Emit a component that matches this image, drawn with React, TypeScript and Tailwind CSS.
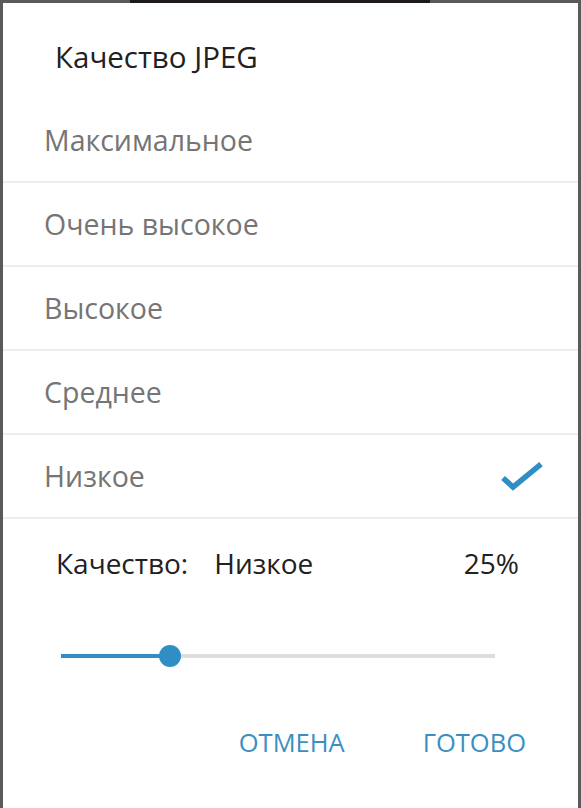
import React from "react";

const items = ["Максимальное", "Очень высокое", "Высокое", "Среднее", "Низкое"];

export default function App() {
  return (
    <div className="w-[581px] h-[808px] bg-[#5a5a5a] flex flex-col overflow-hidden" style={{ fontFamily: '"Open Sans", "Noto Sans", sans-serif' }}>
      <div className="h-[3px] flex shrink-0">
        <div className="w-[130px] bg-[#5a5a5a]" />
        <div className="w-[300px] bg-[#1e1a1a]" />
        <div className="flex-1 bg-[#5a5a5a]" />
      </div>
      <div className="mx-[3px] flex-1 bg-white flex flex-col">
        <div className="h-[96px] pl-[52px] pt-[35px] text-[29.5px] leading-[38px] text-[#212121]">Качество JPEG</div>
        {items.map((t, i) => (
          <div key={t} className="h-[84px] flex flex-col">
            <div className="flex-1 flex items-center justify-between pl-[41px] pr-[34px] pt-[1px] text-[28.5px] text-[#757575]">
              <span>{t}</span>
              {i === 4 && (
                <svg width="44" height="34" viewBox="0 0 44 34">
                  <path d="M3 18 L13 27 L41 4" fill="none" stroke="#2f8fc4" strokeWidth="5.5" strokeLinejoin="miter" />
                </svg>
              )}
            </div>
            <div className="h-[2px] bg-[#ededed]" />
          </div>
        ))}
        <div className="flex items-center pl-[53px] pr-[59px] pt-[25px] text-[28px] text-[#212121] leading-[38px]">
          <span>Качество:</span>
          <span className="ml-[26px]">Низкое</span>
          <span className="ml-auto">25%</span>
        </div>
        <div className="relative ml-[58px] w-[434px] h-[24px] mt-[62px]">
          <div className="absolute left-0 right-0 top-[10px] h-[4px] bg-[#dddddd]" />
          <div className="absolute left-0 w-[109px] top-[10px] h-[4px] bg-[#2f8fc4]" />
          <div className="absolute left-[98px] top-[1px] w-[22px] h-[22px] rounded-full bg-[#2f8fc4]" />
        </div>
        <div className="flex justify-end gap-[78px] pr-[52px] mt-[55px] text-[25.5px] text-[#3a8fc0]">
          <span>ОТМЕНА</span>
          <span>ГОТОВО</span>
        </div>
      </div>
    </div>
  );
}
